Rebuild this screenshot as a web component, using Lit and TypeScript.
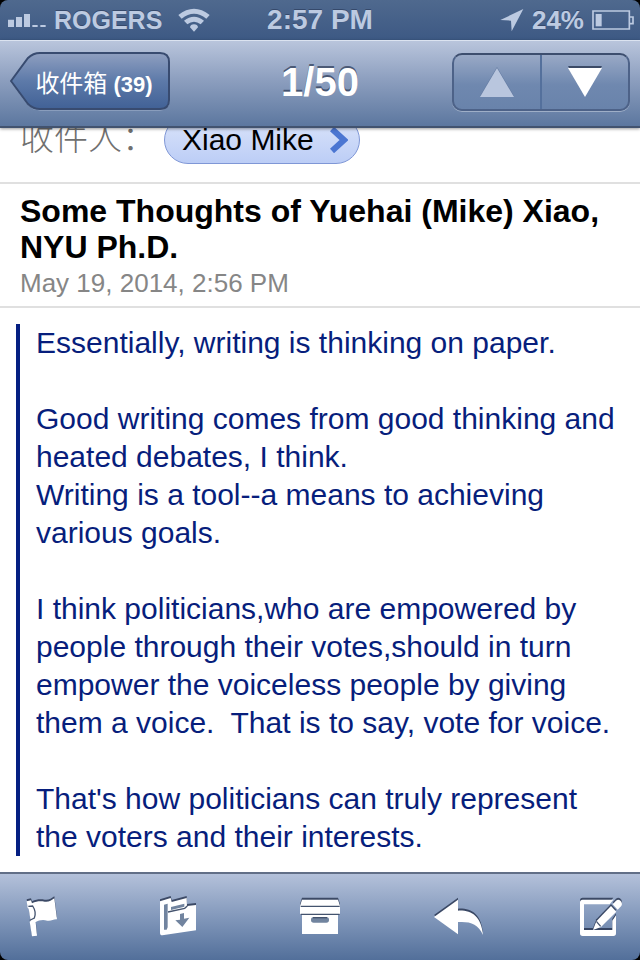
import { LitElement, html, css, svg } from "lit";
import { customElement } from "lit/decorators.js";

const tools = [
  {
    label: "Flag",
    box: "36 99 180 144",
    art: svg`
      <path d="M80 124L93 121L96 130C112 122 124 124 134 125C146 127 154 121 163 115L171 178C160 177 154 184 142 182C128 178 116 181 107 186L111 227L96 229L89 185L92 182L86 146L83 144Z"/>
      <path class="line" d="M85 139L98 138Q110 156 103 174L91 180"/>`,
  },
  {
    label: "Move to folder",
    box: "453 99 180 144",
    art: svg`
      <path d="M480 124L512 114L515 126L560 114L561 138L588 135V211L487 226Q480 226 480 218Z"/>
      <path class="cut" d="M492 134L503 131V202L500 209H492ZM513 141L553 131V140L513 150Z"/>
      <path class="line" d="M504 156L554 145L562 138"/>
      <path class="cut" d="M540 162L552 159V176L568 173L547 201L526 181L540 179Z"/>`,
  },
  {
    label: "Archive",
    box: "30 99 180 144",
    art: svg`
      <path d="M66 119H174L180 138V163H174V222H66V163H60V138Z"/>
      <path class="line" d="M62 139H179M62 163H179"/>
      <rect class="cut" x="93" y="171" width="54" height="17" rx="8"/>
      <path class="line" d="M99 173H141"/>`,
  },
  {
    label: "Reply",
    box: "447 99 180 144",
    art: svg`<path d="M462 171L534 119V152C574 150 604 168 609 225C594 190 570 184 534 186V223Z"/>`,
  },
  {
    label: "Compose",
    box: "84 99 180 144",
    art: svg`
      <path fill-rule="evenodd" d="M128 119H220L209 133H132V210H217V182L228 166V220Q228 228 220 228H128Q120 228 120 220V127Q120 119 128 119Z"/>
      <path d="M159 210L169 184L213 138L229 155L183 201Z"/>
      <path d="M218 133L228 122Q237 116 244 125Q248 133 243 139L233 149Z"/>
      <path class="line" d="M169 184L182 199"/>`,
  },
];

@customElement("app-root")
export class AppRoot extends LitElement {
  static styles = css`
    :host {
      display: flex;
      flex-direction: column;
      min-height: 100vh;
      background: #000;
      font-family: "Liberation Sans", "Noto Sans CJK SC", sans-serif;
      color: #000;
    }
    * { box-sizing: border-box; }
    svg { display: block; flex: none; }
    button {
      margin: 0;
      padding: 0;
      border: 0;
      background: none;
      font: inherit;
      color: inherit;
      cursor: pointer;
    }

    .status {
      display: grid;
      grid-template-columns: 1fr auto 1fr;
      align-items: center;
      height: 40px;
      padding: 0 6px;
      border-radius: 8px 8px 0 0;
      background: linear-gradient(#4f698e, #3d5984);
      color: #bccae1;
      font-weight: 700;
      font-size: 26px;
      text-shadow: 0 -1px 0 #35496b;
    }
    .side { display: flex; align-items: center; gap: 8px; }
    .glyph { fill: currentColor; }
    .signal { margin-left: 2px; }
    .carrier { margin-right: 8px; font-size: 25px; }
    .end { justify-content: flex-end; }
    .battery { fill: none; stroke: currentColor; stroke-width: 5; }
    .level { fill: currentColor; stroke: none; }
    .clock { font-size: 28px; }

    .nav {
      display: grid;
      grid-template-columns: 1fr auto 1fr;
      align-items: center;
      height: 88px;
      padding: 0 10px 4px;
      border-top: 1px solid #dbe3f0;
      border-bottom: 2px solid #42536f;
      background: linear-gradient(#b9c5dc, #8d9fbf 45%, #5c779f);
      color: #fff;
      position: relative;
      z-index: 1;
      box-shadow: 0 1px 3px rgba(0, 0, 0, 0.4);
      text-shadow: 0 -2px 0 rgba(40, 54, 82, 0.7);
    }
    .back {
      display: grid;
      justify-self: start;
      align-items: center;
      width: 160px;
      font-size: 22px;
      font-weight: 700;
    }
    .back > * { grid-area: 1 / 1; }
    .back-text { padding-left: 8px; white-space: nowrap; }
    .cjk {
      font-family: "Noto Sans CJK SC", sans-serif;
      font-size: 24px;
      font-weight: 400;
    }
    h1 { margin: 0; font-size: 40px; line-height: 48px; }
    .pager {
      display: flex;
      justify-self: end;
      width: 178px;
      height: 58px;
      border: 2px solid #4d6288;
      border-top-color: #3d4e6e;
      border-radius: 10px;
      background: linear-gradient(#99a9c6, #6f88af 55%, #6983ab);
      box-shadow: 0 1px 0 rgba(255, 255, 255, 0.35);
    }
    .pager button { flex: 1; display: grid; place-items: center; }
    .pager button + button { border-left: 2px solid #54709c; }
    .arrow { fill: #fff; filter: drop-shadow(0 -2px 0 #3b4a66); }
    .pager button:disabled .arrow { fill: #b9c6de; filter: drop-shadow(0 -1px 0 #60789f); }

    main { flex: 1; overflow: hidden; background: #fff; }
    /* The message is scrolled a little, so the recipient row starts under the bar. */
    .to {
      display: flex;
      align-items: baseline;
      gap: 8px;
      height: 86px;
      margin-top: -30px;
      padding: 18px 20px 0;
      border-bottom: 2px solid #e0e0e0;
    }
    .to-label {
      font-family: "Noto Sans CJK SC", sans-serif;
      font-size: 34px;
      font-weight: 300;
      line-height: 40px;
      color: #707070;
    }
    .pill {
      display: flex;
      align-items: center;
      gap: 16px;
      height: 48px;
      padding: 0 11px 0 17px;
      border: 1px solid #7f97d6;
      border-radius: 24px;
      background: linear-gradient(#dbe4fa, #bccdf6);
      font-size: 30px;
      white-space: nowrap;
    }
    .subject { padding: 9px 20px 5px; border-bottom: 2px solid #e0e0e0; }
    h2 { margin: 0; font-size: 32px; line-height: 36px; }
    time { display: block; font-size: 26px; line-height: 36px; color: #868686; }
    blockquote {
      margin: 16px 0 16px 16px;
      padding: 0 20px 0 16px;
      border-left: 4px solid #051f82;
      color: #071e7c;
      font-size: 30px;
      line-height: 38px;
    }
    blockquote p { margin: 0 0 38px; white-space: pre-wrap; }
    blockquote p:last-child { margin: 0; }

    .tools {
      display: flex;
      align-items: center;
      justify-content: space-between;
      height: 88px;
      padding: 0 12px;
      border-top: 2px solid #626f87;
      border-radius: 0 0 8px 8px;
      background: linear-gradient(#b4c1da, #8298bb 50%, #526f9a);
    }
    .tools svg { fill: #fff; filter: drop-shadow(0 -2px 0 rgba(38, 50, 78, 0.8)); }
    .tools .line { fill: none; stroke: #44536e; stroke-width: 4; }
    .tools .cut { fill: #71849f; }
  `;

  render() {
    return html`
      <header class="status">
        <div class="side">
          <svg class="glyph signal" width="38" height="13" viewBox="24 48 114 39">
            <path d="M24 65h18v22h-18zM48 57h18v30h-18zM72 48h18v39h-18zM97 81h16v6h-16zM121 81h16v6h-16z" />
          </svg>
          <span class="carrier">ROGERS</span>
          <svg class="glyph" width="32" height="24" viewBox="534 22 96 72">
            <path d="M535 43Q582 5 629 43L619 54Q582 24 545 54ZM552 60Q582 36 612 60L602 71Q582 55 562 71Z" />
            <path d="M582 71Q593 71 594 80L582 93L570 80Q571 71 582 71Z" />
          </svg>
        </div>
        <span class="clock">2:57 PM</span>
        <div class="side end">
          <svg class="glyph" width="24" height="24" viewBox="518 22 72 72">
            <path d="M588 25L553 92L551 60L519 58Z" />
          </svg>
          <span>24%</span>
          <svg class="battery" width="42" height="20" viewBox="816 26 126 60">
            <path d="M819 29H928V83H819ZM930 47H939V67H930" />
            <rect class="level" x="827" y="38" width="18" height="37" />
          </svg>
        </div>
      </header>

      <nav class="nav">
        <button class="back">
          <svg width="160" height="59" viewBox="0 0 160 59">
            <defs>
              <linearGradient id="fill" x2="0" y2="1">
                <stop offset="0" stop-color="#8f9fc0" />
                <stop offset="0.5" stop-color="#5d7aa9" />
                <stop offset="1" stop-color="#416196" />
              </linearGradient>
            </defs>
            <path d="M1 30L18 7Q23 2 30 2H150Q159 2 159 11V49Q159 58 150 58H30Q23 58 18 53Z" fill="none" stroke="#a5b5d0" />
            <path d="M1 29L18 6Q23 1 30 1H150Q159 1 159 10V48Q159 57 150 57H30Q23 57 18 52Z" fill="url(#fill)" stroke="#384b70" stroke-width="2" />
          </svg>
          <span class="back-text"><span class="cjk">收件箱</span> (39)</span>
        </button>
        <h1>1/50</h1>
        <div class="pager">
          <button disabled aria-label="Previous message">
            <svg class="arrow" width="34" height="30" viewBox="0 0 34 30"><path d="M17 1L34 30H0Z" /></svg>
          </button>
          <button aria-label="Next message">
            <svg class="arrow" width="34" height="30" viewBox="0 0 34 30"><path d="M0 1H34L17 30Z" /></svg>
          </button>
        </div>
      </nav>

      <main>
        <div class="to">
          <span class="to-label">收件人：</span>
          <button class="pill">
            Xiao Mike
            <svg width="18" height="26" viewBox="0 0 18 26">
              <path d="M2 2L14 13L2 24" fill="none" stroke="#4b76d2" stroke-width="6" />
            </svg>
          </button>
        </div>
        <div class="subject">
          <h2>Some Thoughts of Yuehai (Mike) Xiao, NYU Ph.D.</h2>
          <time datetime="2014-05-19T14:56">May 19, 2014, 2:56 PM</time>
        </div>
        <blockquote>
          <p>Essentially, writing is thinking on paper.</p>
          <p>Good writing comes from good thinking and heated debates, I think.
Writing is a tool--a means to achieving various goals.</p>
          <p>I think politicians,who are empowered by people through their votes,should in turn empower the voiceless people by giving them a voice.  That is to say, vote for voice.</p>
          <p>That's how politicians can truly represent the voters and their interests.</p>
        </blockquote>
      </main>

      <footer class="tools">
        ${tools.map(
          (t) => html`<button aria-label=${t.label}>
            <svg width="60" height="48" viewBox=${t.box}>${t.art}</svg>
          </button>`
        )}
      </footer>
    `;
  }
}
